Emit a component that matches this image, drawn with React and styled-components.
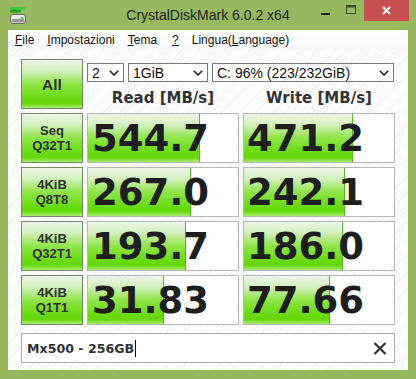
import React from "react";
import styled, { createGlobalStyle } from "styled-components";

const GlobalStyle = createGlobalStyle`
  html, body {
    margin: 0;
    padding: 0;
    background: #97b85c;
  }
`;

const Window = styled.div`
  width: 416px;
  height: 379px;
  background: #97b85c;
  display: flex;
  flex-direction: column;
  box-sizing: border-box;
  overflow: hidden;
`;

const TitleBar = styled.div`
  height: 30px;
  display: grid;
  grid-template-columns: 1fr auto 1fr;
  align-items: start;
`;

const AppIcon = styled.svg`
  margin: 7px 0 0 10px;
  justify-self: start;
`;

const Title = styled.div`
  font-family: "Liberation Sans", Arial, sans-serif;
  font-size: 14px;
  color: #222;
  line-height: 30px;
`;

const Controls = styled.div`
  justify-self: end;
  display: flex;
  padding-right: 7px;
`;

const CtrlButton = styled.div`
  width: ${(p) => (p.$close ? 45 : 26)}px;
  height: 21px;
  display: flex;
  align-items: center;
  justify-content: center;
  background: ${(p) => (p.$close ? "#c75050" : "transparent")};
`;

const Client = styled.div`
  flex: 1;
  margin: 0 8px 9px;
  display: flex;
  flex-direction: column;
  background: #fff;
`;

const MenuBar = styled.div`
  height: 20px;
  display: flex;
  align-items: center;
  gap: 13px;
  padding-left: 7px;
  background: linear-gradient(#ffffff, #f5f6f7);
  font-family: "Liberation Sans", Arial, sans-serif;
  font-size: 12px;
  color: #111;

  u {
    text-decoration: underline;
    text-underline-offset: 1px;
  }
`;

const Content = styled.div`
  flex: 1;
  padding: 9px 13px 7px;
  background: repeating-linear-gradient(
    135deg,
    #ffffff 0px,
    #ffffff 3px,
    #f1f1f1 3px,
    #f1f1f1 4px
  );
  display: flex;
  flex-direction: column;
`;

const Grid = styled.div`
  display: grid;
  grid-template-columns: 62px 152px 152px;
  grid-auto-rows: 50px;
  column-gap: 4px;
  row-gap: 4px;
`;

const greenGradient = `linear-gradient(
  to bottom,
  #eef5ea 0%,
  #d4f0bf 22%,
  #8fe548 50%,
  #6bdc12 78%,
  #63d808 90%,
  #a6ee6e 100%
)`;

const GreenButton = styled.div`
  box-sizing: border-box;
  border: 1px solid #75866f;
  background: ${greenGradient};
  display: flex;
  flex-direction: column;
  align-items: center;
  justify-content: center;
  font-family: "Liberation Sans", Arial, sans-serif;
  font-weight: bold;
  color: #2e2e2e;
  font-size: ${(p) => (p.$big ? 15.5 : 13)}px;
  line-height: 15px;
`;

const TopControls = styled.div`
  grid-column: 2 / 4;
  display: flex;
  flex-direction: column;
`;

const SelectRow = styled.div`
  margin-top: 4px;
  display: flex;
  gap: 4px;
`;

const Select = styled.div`
  box-sizing: border-box;
  width: ${(p) => p.$w}px;
  height: 19px;
  border: 1px solid #7a7a7a;
  background: #fff;
  display: flex;
  align-items: center;
  justify-content: space-between;
  padding: 0 4px 0 4px;
  font-family: "Liberation Sans", Arial, sans-serif;
  font-size: 14px;
  color: #111;
`;

const Headers = styled.div`
  margin-top: 7px;
  display: grid;
  grid-template-columns: 152px 152px;
  column-gap: 4px;
`;

const Header = styled.div`
  text-align: center;
  font-family: "DejaVu Sans", Verdana, sans-serif;
  font-weight: bold;
  font-size: 15px;
  line-height: 18px;
  color: #333;
`;

const Cell = styled.div`
  position: relative;
  box-sizing: border-box;
  border: 1px solid #b7b7b7;
  background: #fff;
  overflow: hidden;
`;

const Bar = styled.div`
  position: absolute;
  left: 0;
  top: 0;
  bottom: 0;
  background: ${greenGradient};
  border-right: 1px solid #58b22a;
`;

const Value = styled.div`
  position: relative;
  padding: 1px 0 0 ${(p) => p.$pad}px;
  font-family: "DejaVu Sans", Verdana, sans-serif;
  font-weight: bold;
  font-size: 37px;
  line-height: 48px;
  color: #1e1e1e;
  white-space: nowrap;
`;

const Comment = styled.div`
  margin-top: 8px;
  box-sizing: border-box;
  height: 30px;
  border: 1px solid #ababab;
  background: #fff;
  display: flex;
  align-items: center;
  padding: 0 7px 0 5px;
  font-family: "DejaVu Sans", Verdana, sans-serif;
  font-weight: bold;
  font-size: 12.6px;
  color: #333;
`;

const Caret = styled.span`
  display: inline-block;
  width: 1px;
  height: 17px;
  background: #000;
  margin-left: 1px;
`;

const Spacer = styled.div`
  flex: 1;
`;

const Chevron = () => (
  <svg width="10" height="6" viewBox="0 0 10 6">
    <path d="M0.8 0.8 L5 5 L9.2 0.8" fill="none" stroke="#222" strokeWidth="1.6" />
  </svg>
);

const rows = [
  { l1: "Seq", l2: "Q32T1", read: "544.7", rf: 0.74, write: "471.2", wf: 0.72 },
  { l1: "4KiB", l2: "Q8T8", read: "267.0", rf: 0.68, write: "242.1", wf: 0.665 },
  { l1: "4KiB", l2: "Q32T1", read: "193.7", rf: 0.645, write: "186.0", wf: 0.65 },
  { l1: "4KiB", l2: "Q1T1", read: "31.83", rf: 0.5, write: "77.66", wf: 0.565 },
];

export default function App() {
  return (
    <>
      <GlobalStyle />
      <Window>
        <TitleBar>
          <AppIcon width="16" height="18" viewBox="0 0 16 18">
            <rect x="0" y="0" width="15" height="3" fill="#3cc83c" />
            <rect x="0" y="3" width="11" height="2.5" fill="#22a022" />
            <rect x="0.5" y="7.5" width="15" height="9" rx="2.5" fill="#e8e8e8" stroke="#6a6a6a" />
            <rect x="1.5" y="12" width="13" height="3.5" rx="1.5" fill="#9a9a9a" />
            <rect x="11" y="10" width="2" height="3" fill="#2bd42b" />
          </AppIcon>
          <Title>CrystalDiskMark 6.0.2 x64</Title>
          <Controls>
            <CtrlButton>
              <svg width="9" height="2" style={{ marginTop: 6 }}>
                <rect width="9" height="2" fill="#222" />
              </svg>
            </CtrlButton>
            <CtrlButton>
              <svg width="10" height="9" style={{ marginTop: -2 }}>
                <rect x="0.5" y="0.5" width="9" height="8" fill="none" stroke="#3c4a2a" />
                <rect x="0.5" y="0.5" width="9" height="2" fill="#3c4a2a" />
              </svg>
            </CtrlButton>
            <CtrlButton $close>
              <svg width="9" height="9" viewBox="0 0 9 9">
                <path d="M1 1 L8 8 M8 1 L1 8" stroke="#fff" strokeWidth="2" />
              </svg>
            </CtrlButton>
          </Controls>
        </TitleBar>
        <Client>
          <MenuBar>
            <span><u>F</u>ile</span>
            <span><u>I</u>mpostazioni</span>
            <span><u>T</u>ema</span>
            <span style={{ marginLeft: 2 }}><u>?</u></span>
            <span>Lingua(<u>L</u>anguage)</span>
          </MenuBar>
          <Content>
            <Grid>
              <GreenButton $big>All</GreenButton>
              <TopControls>
                <SelectRow>
                  <Select $w={37}>
                    <span>2</span>
                    <Chevron />
                  </Select>
                  <Select $w={80}>
                    <span>1GiB</span>
                    <Chevron />
                  </Select>
                  <Select $w={182}>
                    <span>C: 96% (223/232GiB)</span>
                    <Chevron />
                  </Select>
                </SelectRow>
                <Headers>
                  <Header>Read [MB/s]</Header>
                  <Header>Write [MB/s]</Header>
                </Headers>
              </TopControls>
              {rows.map((r, i) => (
                <React.Fragment key={i}>
                  <GreenButton>
                    <span>{r.l1}</span>
                    <span>{r.l2}</span>
                  </GreenButton>
                  <Cell>
                    <Bar style={{ width: `${r.rf * 100}%` }} />
                    <Value $pad={4}>{r.read}</Value>
                  </Cell>
                  <Cell>
                    <Bar style={{ width: `${r.wf * 100}%` }} />
                    <Value $pad={3}>{r.write}</Value>
                  </Cell>
                </React.Fragment>
              ))}
            </Grid>
            <Comment>
              <span>Mx500 - 256GB</span>
              <Caret />
              <Spacer />
              <svg width="14" height="13" viewBox="0 0 14 13">
                <path d="M1.5 1 L12.5 12 M12.5 1 L1.5 12" stroke="#333" strokeWidth="2.2" />
              </svg>
            </Comment>
          </Content>
        </Client>
      </Window>
    </>
  );
}
